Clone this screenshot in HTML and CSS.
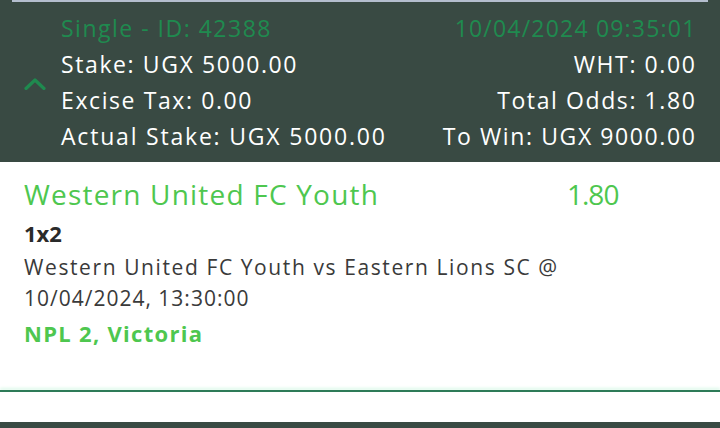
FILE: index.html
```html
<!DOCTYPE html>
<html>
<head>
<meta charset="utf-8">
<link rel="stylesheet" href="styles.css">
</head>
<body>
<div class="header">
  <div class="topline"></div>
  <div class="hbody">
    <div class="chev">
      <svg width="22" height="12" viewBox="0 0 22 12"><path d="M2 10.5 L11 2 L20 10.5" fill="none" stroke="#1f8a4f" stroke-width="3.2" stroke-linecap="round" stroke-linejoin="round"/></svg>
    </div>
    <div class="rows">
      <div class="row green"><span class="id">Single - ID: 42388</span><span class="date">10/04/2024 09:35:01</span></div>
      <div class="row"><span>Stake: UGX 5000.00</span><span>WHT: 0.00</span></div>
      <div class="row"><span>Excise Tax: 0.00</span><span>Total Odds: 1.80</span></div>
      <div class="row"><span class="wide">Actual Stake: UGX 5000.00</span><span>To Win: UGX 9000.00</span></div>
    </div>
  </div>
</div>
<div class="sel">
  <div class="selhead"><span class="team">Western United FC Youth</span><span class="odds">1.80</span></div>
  <div class="market">1x2</div>
  <div class="desc"><span class="l1">Western United FC Youth vs Eastern Lions SC @</span><br><span class="l2">10/04/2024, 13:30:00</span></div>
  <div class="league">NPL 2, Victoria</div>
</div>
<div class="divider"></div>
<div class="gap"></div>
<div class="next"></div>
</body>
</html>
```
FILE: styles.css
```css
html, body {
  margin: 0;
  padding: 0;
  background: #ffffff;
  font-family: "Open Sans", "Noto Sans", sans-serif;
}
.header {
  background: #394a43;
  height: 162px;
  box-sizing: border-box;
}
.topline {
  height: 2px;
  margin: 0 12px;
  background: #b4bece;
}
.hbody {
  display: flex;
  padding: 8px 25px 0 0;
}
.chev {
  width: 61px;
  display: flex;
  justify-content: center;
  padding-top: 68px;
  box-sizing: border-box;
  padding-left: 8px;
}
.chev svg { display: block; }
.rows {
  flex: 1;
  display: flex;
  flex-direction: column;
}
.row {
  display: flex;
  justify-content: space-between;
  height: 36px;
  line-height: 36px;
  font-size: 23px;
  font-weight: 500;
  letter-spacing: 1.6px;
  color: #ffffff;
  white-space: nowrap;
}
.row span:last-child { margin-right: -1.5px; }
.row .wide { letter-spacing: 1.8px; }
.row.green {
  color: #1f8a4f;
  font-size: 23px;
}
.row .id { letter-spacing: 1.5px; }
.row .date { letter-spacing: 1.2px; }
.sel {
  padding: 14px 0 0 24px;
}
.selhead {
  display: flex;
  height: 36px;
  line-height: 36px;
  font-size: 28px;
  font-weight: 500;
  color: #4ec74f;
}
.team { width: 543px; letter-spacing: 1.2px; }
.odds { letter-spacing: -1px; }
.market {
  margin-top: 4px;
  font-size: 22px;
  font-weight: 700;
  color: #2a2a2a;
  line-height: 34px;
}
.desc {
  margin-top: 2px;
  font-size: 21px;
  line-height: 31px;
  color: #3a3a3a;
}
.desc .l1 { letter-spacing: 1.6px; }
.desc .l2 { letter-spacing: 1px; }
.league {
  margin-top: 2px;
  font-size: 22px;
  font-weight: 700;
  color: #4ec74f;
  line-height: 34px;
  letter-spacing: 1.3px;
}
.divider {
  margin-top: 40px;
  height: 2px;
  background: #2e7b58;
  box-shadow: 0 -2px 3px #d6f8e6;
}
.gap { height: 30px; }
.next {
  height: 7px;
  background: #394a43;
}
```
